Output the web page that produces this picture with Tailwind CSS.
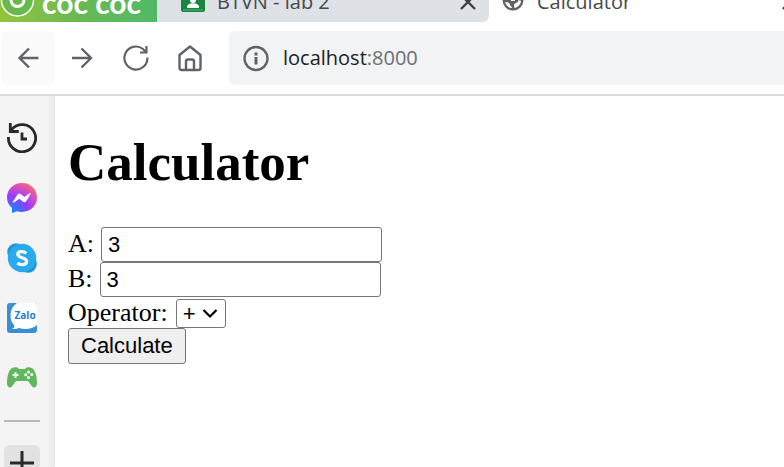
<!DOCTYPE html>
<html lang="en">
<head>
<meta charset="utf-8">
<title>Calculator</title>
<script src="https://cdn.jsdelivr.net/npm/@tailwindcss/browser@4"></script>
</head>
<body class="flex h-screen flex-col overflow-hidden bg-white font-['Open_Sans','Noto_Sans',sans-serif] text-black">
<header class="shrink-0 border-b-2 border-[#dcdcdc]">
  <!-- Tab strip, scrolled partly out of view -->
  <div class="flex h-[22px] items-end overflow-hidden text-[20px] leading-7 text-[#45484c]">
    <div class="flex h-11 w-[157px] shrink-0 items-end gap-[6px] bg-linear-to-r from-[#93c43b] via-[#68b953] to-[#50b968] pb-1 text-white">
      <svg class="size-9 shrink-0" viewBox="0 0 36 36" fill="none" aria-hidden="true">
        <circle cx="17.500" cy="18" r="16" fill="#67b94b" stroke="#fff" stroke-width="1.500"/>
        <circle cx="17.500" cy="18" r="6.500" stroke="#fff" stroke-width="3"/>
        <path d="M22 14L27 8" stroke="#fff" stroke-width="2"/>
      </svg>
      <span class="whitespace-nowrap font-['Lato',sans-serif] text-[30px] font-bold leading-8">cốc cốc</span>
    </div>
    <div class="flex h-11 w-[332px] shrink-0 items-end rounded-br-md bg-[#dee1e6] pr-[11px] pb-[6px] pl-6">
      <svg class="mb-1 h-6 w-6 shrink-0" viewBox="0 0 24 24" aria-hidden="true">
        <rect width="24" height="24" rx="2" fill="#188641"/>
        <circle cx="12" cy="12" r="3" fill="#fff"/>
        <path d="M6 20v-1c0-5 12-5 12 0v1z" fill="#fff"/>
        <path d="M2 22h20" stroke="#2ca45a" stroke-width="2"/>
      </svg>
      <span class="ml-3 flex-1 whitespace-nowrap">BTVN - lab 2</span>
      <button class="pb-1" aria-label="Close BTVN - lab 2">
        <svg class="size-5" viewBox="0 0 20 20" fill="none" stroke="#3c4043" stroke-width="2.400"><path d="M3 3L17 17M17 3L3 17"/></svg>
      </button>
    </div>
    <div class="flex h-11 flex-1 items-end pb-[6px] pl-3">
      <svg class="mb-1 size-6 shrink-0" viewBox="0 0 24 24" aria-hidden="true">
        <circle cx="12" cy="12" r="10.500" fill="#5f6368"/>
        <path d="M4 14c3 0 5 1 5 3 0 1 2 1 2 3-4 0-6-3-7-6zM13 17c0-2 4-2 4-4 0-1 2-1 3 0 0 3-3 6-6 7-1 0-1-2-1-3z" fill="#fff"/>
        <path d="M10 10h4v3h-4z" fill="#fff"/>
      </svg>
      <span class="ml-3 flex-1 whitespace-nowrap">Calculator</span>
      <button class="-mr-4 pb-1" aria-label="Close Calculator">
        <svg class="size-5" viewBox="0 0 20 20" fill="none" stroke="#3c4043" stroke-width="2.400"><path d="M3 3L17 17M17 3L3 17"/></svg>
      </button>
    </div>
  </div>
  <nav class="flex h-[72px] items-center pl-px">
    <button class="flex size-[54px] items-center justify-center rounded-md bg-[#fbfbfb]" aria-label="Back">
      <svg class="size-7" viewBox="0 0 28 28" fill="none" stroke="#5f6368" stroke-width="2.400"><path d="M24.500 14H5.500M15 4.500L5.500 14l9.500 9.500"/></svg>
    </button>
    <button class="flex size-[54px] items-center justify-center" aria-label="Forward">
      <svg class="size-7" viewBox="0 0 28 28" fill="none" stroke="#5f6368" stroke-width="2.400"><path d="M4 14h19M13.500 4.500L23 14l-9.500 9.500"/></svg>
    </button>
    <button class="flex size-[54px] items-center justify-center" aria-label="Reload">
      <svg class="size-7" viewBox="0 0 28 28" fill="none" stroke="#5f6368" stroke-width="2.200"><path d="M25.400 13.500A11.500 11.500 0 1 1 21 5L24 8M24.500 2v6.500h-6.500"/></svg>
    </button>
    <button class="flex size-[54px] items-center justify-center" aria-label="Home">
      <svg class="size-7" viewBox="0 0 28 28" fill="none" stroke="#5f6368" stroke-width="2.400" stroke-linejoin="round"><path d="M3.500 11L14 2.500 24.500 11v13a2 2 0 0 1-2 2h-17a2 2 0 0 1-2-2zM10 26v-8.500a2 2 0 0 1 2-2h4a2 2 0 0 1 2 2V26"/></svg>
    </button>
    <div class="ml-3 flex h-[54px] flex-1 items-center gap-3 rounded-l-md bg-[#f1f3f4] pl-[13px]">
      <svg class="size-7 shrink-0" viewBox="0 0 28 28" fill="none" stroke="#5f6368" aria-hidden="true"><circle cx="14" cy="14.500" r="11.500" stroke-width="2.300"/><path d="M14 8.500v3M14 13v7.500" stroke-width="3"/></svg>
      <span class="pl-px text-[20px] leading-7 text-[#202124]">localhost<span class="text-[#6b6f74]">:8000</span></span>
    </div>
  </nav>
</header>
<div class="flex min-h-0 flex-1">
  <aside class="flex w-[55px] shrink-0 flex-col gap-[30px] overflow-hidden bg-linear-to-r from-[#f4f4f4] from-85% to-[#eaeaea] pt-[27px] pl-[7px]">
    <a href="#" aria-label="History">
      <svg class="size-[30px]" viewBox="0 0 30 30" fill="none" stroke="#292929" stroke-width="2.800"><path d="M1.500 14A13.600 13.600 0 1 0 5 6L3 8M3.300 0v8.500h8.500M15 9.500V16h5"/></svg>
    </a>
    <a href="#" aria-label="Messenger">
      <svg class="size-[30px]" viewBox="0 0 30 30">
        <defs><radialGradient id="messenger" cx=".18" cy="1" r="1.120"><stop stop-color="#008fff"/><stop offset=".5" stop-color="#963cff"/><stop offset=".8" stop-color="#d850bb"/><stop offset="1" stop-color="#ff6968"/></radialGradient></defs>
        <path d="M15 0C6.500 0 0 6.300 0 14.500c0 4.300 1.800 7.800 5 10.400V30l4.800-1.800c1.600.5 3.300.7 5.200.7 8.500 0 15-6.200 15-14.400S23.500 0 15 0z" fill="url(#messenger)"/>
        <path d="M6 18.500l4.500-7c.8-1.200 2-1.300 3-.5l3.400 2.600c.4.300.8.300 1.200 0l4.400-3.400c.7-.5 1.500.2 1 1l-4.300 7c-.8 1.200-2 1.400-3 .6l-3.400-2.600c-.4-.3-.8-.3-1.200 0L7 19.500c-.7.500-1.500-.3-1-1z" fill="#fff"/>
      </svg>
    </a>
    <a href="#" aria-label="Skype">
      <svg class="size-[30px]" viewBox="0 0 30 30">
        <circle cx="9" cy="9" r="8.700" fill="#1e96d8"/><circle cx="21" cy="21" r="8.800" fill="#1e96d8"/>
        <circle cx="15" cy="15" r="14.200" fill="#2aa9ec"/>
        <path d="M19.300 10.400C16.500 8 10.800 8 10.800 11.300c0 4.200 8.800 2.700 8.800 7.200 0 4-6.200 4-9.200 1.500" fill="none" stroke="#fff" stroke-width="3.200"/>
      </svg>
    </a>
    <a href="#" aria-label="Zalo">
      <svg class="size-[30px]" viewBox="0 0 30 30">
        <rect width="30" height="30" rx="3" fill="#398ed4"/>
        <path d="M10 0h17a3 3 0 0 1 3 3v19c-4 4-12 5-18 3-2 1-4 1-7 1 2-1 3-2 2-4C2 17 2 5 10 0z" fill="#fff"/>
        <text x="7.500" y="16" fill="#2881c9" font-family="Open Sans, sans-serif" font-size="10" font-weight="700">Zalo</text>
      </svg>
    </a>
    <a href="#" aria-label="Games">
      <svg class="size-[30px]" viewBox="0 0 30 30">
        <path d="M7 4.500c2-.6 4-.2 5 1.500h6c1-1.700 3-2.100 5-1.500 5 0 7 9 7 15.500 0 5-4 6-6 2l-3-4H9l-3 4c-2 4-6 3-6-2C0 13.500 2 4.500 7 4.500z" fill="#60b75e"/>
        <path d="M8.500 9v6M5.500 12h6" stroke="#fff" stroke-width="2"/>
        <g fill="#fff"><circle cx="21.500" cy="9" r="1.500"/><circle cx="24.800" cy="11.500" r="1.500"/><circle cx="18.700" cy="11.800" r="1.500"/><circle cx="21.500" cy="14.500" r="1.500"/></g>
      </svg>
    </a>
    <div class="-mx-[3px] -mt-[3px] flex w-9 shrink-0 flex-col border-t-2 border-[#b9b9b9] pt-[23px]">
      <button class="flex size-9 items-center justify-center rounded-md bg-[#e2e2e2]" aria-label="Add">
        <svg class="size-6" viewBox="0 0 24 24" stroke="#292929" stroke-width="3"><path d="M12 0v24M0 12h24"/></svg>
      </button>
    </div>
  </aside>
  <main class="flex-1 pt-9 pl-[13px] font-['Liberation_Serif',serif] text-[26px] leading-[30px]">
    <h1 class="pb-[35px] text-[53px] font-bold leading-[60px]">Calculator</h1>
    <form class="flex flex-col items-start">
      <div class="flex items-baseline gap-[7px]">
        <label for="a">A:</label>
        <input id="a" type="text" value="3" class="h-[35px] w-[281px] rounded-[3px] border border-[#767676] bg-white px-[6px] font-['Liberation_Sans',sans-serif] text-[22px]">
      </div>
      <div class="flex items-baseline gap-[7px]">
        <label for="b">B:</label>
        <input id="b" type="text" value="3" class="h-[35px] w-[281px] rounded-[3px] border border-[#767676] bg-white px-[6px] font-['Liberation_Sans',sans-serif] text-[22px]">
      </div>
      <div class="flex items-baseline gap-2 pt-px">
        <label for="operator">Operator:</label>
        <div class="relative">
          <select id="operator" class="block h-[29px] w-[50px] appearance-none rounded-[3px] border border-[#767676] bg-white pl-[6px] font-['Liberation_Sans',sans-serif] text-[22px] leading-[27px]">
            <option>+</option><option>-</option><option>*</option><option>/</option>
          </select>
          <svg class="pointer-events-none absolute top-2 right-2 h-3 w-4" viewBox="0 0 16 12" fill="none" stroke="#000" stroke-width="2.200"><path d="M1.500 3L8 9.500 14.500 3"/></svg>
        </div>
      </div>
      <button type="button" class="h-9 rounded-[3px] border border-[#767676] bg-[#efefef] px-3 font-['Liberation_Sans',sans-serif] text-[22px]">Calculate</button>
    </form>
  </main>
</div>
</body>
</html>
